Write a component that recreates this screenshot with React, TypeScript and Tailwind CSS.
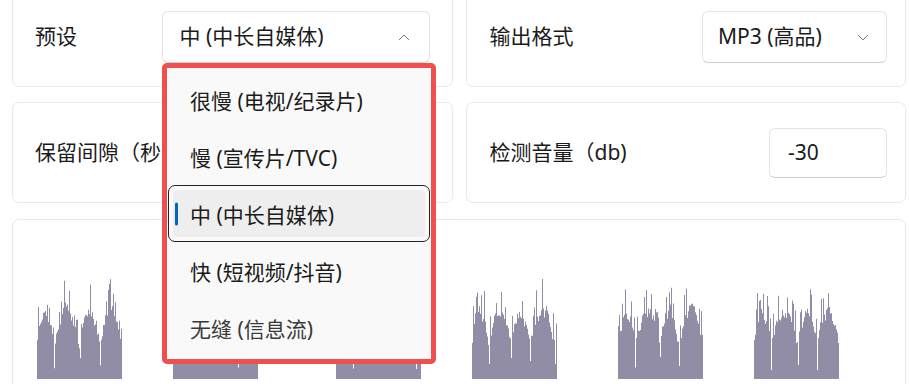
import React from 'react';

const FONT = { fontFamily: '"Noto Sans", "Noto Sans CJK SC", sans-serif' };

const OPTIONS = ['很慢 (电视/纪录片)', '慢 (宣传片/TVC)', '中 (中长自媒体)', '快 (短视频/抖音)', '无缝 (信息流)'];
const SELECTED = 2;

// left edge of each clip, in card coordinates
const CLIPS = [24, 160, 323, 459, 605, 741];
const BASE = 159;

function rng(seed: number) {
  let s = seed;
  return () => {
    s = (s * 16807) % 2147483647;
    return (s - 1) / 2147483646;
  };
}

function clipPath(x0: number, seed: number) {
  const rand = rng(seed);
  const width = 85;
  // split into humps
  const cuts = [0];
  let pos = 0;
  while (pos < width) {
    pos += 17 + Math.floor(rand() * 12);
    cuts.push(Math.min(pos, width));
  }
  let d = `M${x0} ${BASE}`;
  let n = 0.5;
  for (let i = 0; i < width; i++) {
    let k = 0;
    while (cuts[k + 1] <= i) k++;
    const a = cuts[k];
    const b = cuts[k + 1];
    const t = (i - a + 0.5) / (b - a);
    const env = 0.5 + 0.5 * Math.pow(Math.sin(Math.PI * t), 0.8);
    n = n * 0.5 + rand() * 0.5;
    let h = env * (52 + 28 * n);
    const r = rand();
    if (r > 0.72) h += 8 + rand() * 20;
    if (i === a && a !== 0) h = 8 + rand() * 14;
    h = Math.min(h, 100);
    d += ` L${x0 + i} ${(BASE - h).toFixed(1)} L${x0 + i + 1} ${(BASE - h).toFixed(1)}`;
  }
  d += ` L${x0 + width} ${BASE} Z`;
  return d;
}

function Chevron({ up }: { up?: boolean }) {
  return (
    <svg width="12" height="7" viewBox="0 0 12 7" className="shrink-0">
      <polyline
        points={up ? '1,6 6,1 11,6' : '1,1 6,6 11,1'}
        fill="none"
        stroke="#7a7a7a"
        strokeWidth="1"
      />
    </svg>
  );
}

function Card({ children, className = '' }: { children: React.ReactNode; className?: string }) {
  return (
    <div className={`rounded-[7px] border border-[#e9e9e9] bg-white ${className}`}>{children}</div>
  );
}

export default function App() {
  return (
    <div className="relative h-[384px] w-[909px] overflow-hidden bg-white text-[21px] text-[#1b1b1b]" style={FONT}>
      <div className="-mt-[15px] flex flex-col gap-[15px] pl-[12px] pr-[3px]">
        <div className="grid grid-cols-2 gap-[13px]">
          <Card className="flex h-[102px] items-center justify-between pl-[22px] pr-[22px] pt-[2px]">
            <span>预设</span>
            <div className="flex h-[52px] w-[268px] items-center justify-between rounded-[6px] border border-[#e3e3e3] border-b-[#cfcfcf] bg-white pl-[17px] pr-[19px]">
              <span>中 (中长自媒体)</span>
              <Chevron up />
            </div>
          </Card>
          <Card className="flex h-[102px] items-center justify-between pl-[23px] pr-[18px] pt-[2px]">
            <span>输出格式</span>
            <div className="flex h-[52px] w-[185px] items-center justify-between rounded-[6px] border border-[#e3e3e3] border-b-[#cfcfcf] bg-white pl-[15px] pr-[17px]">
              <span>MP3 (高品)</span>
              <Chevron />
            </div>
          </Card>
        </div>

        <div className="grid grid-cols-2 gap-[13px]">
          <Card className="flex h-[101px] items-center justify-between pl-[22px] pr-[22px]">
            <span>保留间隙（秒）</span>
            <div className="h-[50px] w-[118px] rounded-[6px] border border-[#e3e3e3] border-b-[#cfcfcf] bg-white" />
          </Card>
          <Card className="flex h-[101px] items-center justify-between pl-[23px] pr-[18px]">
            <span>检测音量（db)</span>
            <div className="flex h-[50px] w-[118px] items-center rounded-[6px] border border-[#e3e3e3] border-b-[#cfcfcf] bg-white pl-[18px]">
              -30
            </div>
          </Card>
        </div>

        <Card className="mt-[1px] h-[200px]">
          <svg width="894" height="165" viewBox="0 0 894 165" className="block">
            {CLIPS.map((x, i) => (
              <path key={i} d={clipPath(x, 97 + i * 131)} fill="#918da7" />
            ))}
          </svg>
        </Card>
      </div>

      {/* open dropdown */}
      <div className="absolute left-[162px] top-[63px] h-[301px] w-[274px] rounded-[5px] border-[5px] border-[#f04f4f] bg-[#f9f9f9] py-[3px]">
        {OPTIONS.map((label, i) => {
          const sel = i === SELECTED;
          return (
            <div key={label} className="h-[57px] px-[1px]">
              <div className={sel ? 'h-full rounded-[7px] border border-[#232323] p-[4px]' : 'h-full p-[5px]'}>
                <div className={`relative flex h-full items-center rounded-[4px] pl-[17px] pt-[4px] ${sel ? 'bg-[#eeeeee]' : ''} ${i === 4 ? 'text-[#3a3a3a]' : ''}`}>
                  {sel && (
                    <span className="absolute left-[2px] top-1/2 h-[23px] w-[3px] -translate-y-1/2 rounded-full bg-[#0067c0]" />
                  )}
                  {label}
                </div>
              </div>
            </div>
          );
        })}
      </div>
    </div>
  );
}
